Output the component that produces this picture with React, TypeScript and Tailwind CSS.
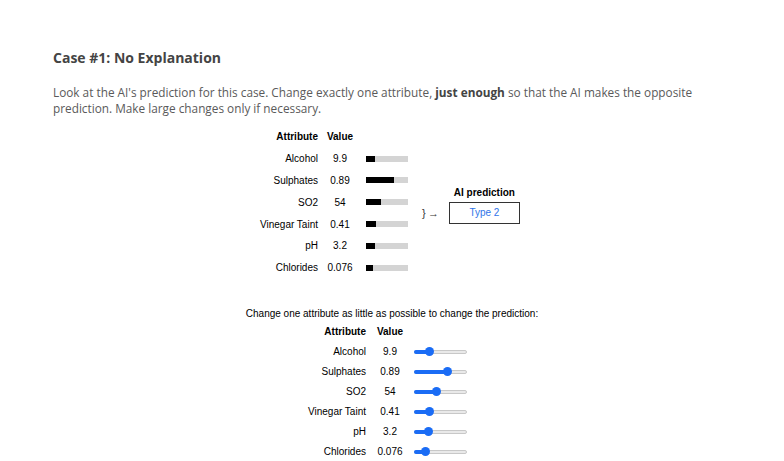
const prediction = [
  { name: "Alcohol", value: "9.9", fill: 9 },
  { name: "Sulphates", value: "0.89", fill: 27.5 },
  { name: "SO2", value: "54", fill: 15 },
  { name: "Vinegar Taint", value: "0.41", fill: 10 },
  { name: "pH", value: "3.2", fill: 9 },
  { name: "Chlorides", value: "0.076", fill: 6.5 },
];

// thumb centre, in px from the track's left edge
const sliders = [15, 33.5, 22.5, 15, 14.5, 11.5];

function Bar({ fill }: { fill: number }) {
  return (
    <div className="h-[6px] w-[42px] bg-[#d4d4d4]">
      <div className="h-full bg-black" style={{ width: fill }} />
    </div>
  );
}

function Slider({ pos }: { pos: number }) {
  return (
    <div className="relative h-[10px] w-[53px]">
      <div className="absolute left-0 right-0 top-[3px] h-[4px] rounded-full border border-[#c8c8c8] bg-[#e9e9e9]" />
      <div
        className="absolute left-0 top-[3px] h-[4px] rounded-full bg-[#1a6cf5]"
        style={{ width: pos }}
      />
      <div
        className="absolute top-[0.5px] h-[9px] w-[9px] rounded-full bg-[#1a6cf5]"
        style={{ left: pos - 4.5 }}
      />
    </div>
  );
}

export default function App() {
  return (
    <div className="min-h-[461px] w-full bg-white font-['Liberation_Sans',Arial,sans-serif] text-black">
      <div className="px-[53px] pt-[49px]">
        <h2 className="font-['Open_Sans',sans-serif] text-[14px] font-bold leading-[18px] text-[#444]">
          Case #1: No Explanation
        </h2>
        <p className="mt-[17px] font-['Open_Sans',sans-serif] text-[11.8px] leading-[16px] text-[#5a5a5a]">
          Look at the AI's prediction for this case. Change exactly one attribute,{" "}
          <b className="font-bold text-[#444]">just enough</b> so that the AI makes the opposite
          <br />
          prediction. Make large changes only if necessary.
        </p>
      </div>

      {/* prediction table */}
      <div className="mt-[10px] flex items-start pl-[254px]">
        <div className="text-[10px]">
          <div className="flex h-[21.8px] items-center">
            <div className="w-[64px] text-right font-bold">Attribute</div>
            <div className="ml-[6px] w-[32px] text-center font-bold">Value</div>
          </div>
          {prediction.map((r) => (
            <div key={r.name} className="flex h-[21.8px] items-center">
              <div className="w-[64px] text-right">{r.name}</div>
              <div className="ml-[6px] w-[32px] text-center">{r.value}</div>
              <div className="ml-[10px]">
                <Bar fill={r.fill} />
              </div>
            </div>
          ))}
        </div>
        <div className="mt-[21.8px] flex h-[130.8px] items-center">
          <div className="ml-[14px] text-[11px] text-[#333]">{"}"}&thinsp;→</div>
          <div className="ml-[10px] flex flex-col items-center">
            <div className="h-[12px] text-[10px] font-bold leading-[12px]">AI prediction</div>
            <div className="mt-[3px] flex h-[22px] w-[71px] items-center justify-center border-[1.5px] border-[#333] text-[10px] text-[#2f74e8]">
              Type 2
            </div>
            <div className="h-[16px]" />
          </div>
        </div>
      </div>

      {/* counterfactual sliders */}
      <div className="mt-[28px] flex flex-col text-[10px]">
        <div className="h-[14px] self-center leading-[14px]">
          Change one attribute as little as possible to change the prediction:
        </div>
        <div className="ml-[294px] mt-[1px]">
          <div className="flex h-[20px] items-center">
            <div className="w-[72px] text-right font-bold">Attribute</div>
            <div className="ml-[6px] w-[36px] text-center font-bold">Value</div>
          </div>
          {prediction.map((r, i) => (
            <div key={r.name} className="flex h-[20px] items-center">
              <div className="w-[72px] text-right">{r.name}</div>
              <div className="ml-[6px] w-[36px] text-center">{r.value}</div>
              <div className="ml-[6px]">
                <Slider pos={sliders[i]} />
              </div>
            </div>
          ))}
        </div>
      </div>
    </div>
  );
}
